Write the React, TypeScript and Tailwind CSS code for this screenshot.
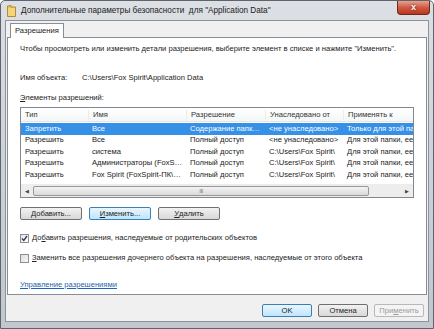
const rows = [
  { type: "Запретить", name: "Все", perm: "Содержание папк…", from: "<не унаследовано>", apply: "Только для этой па", sel: true },
  { type: "Разрешить", name: "Все", perm: "Полный доступ", from: "<не унаследовано>", apply: "Для этой папки, ее" },
  { type: "Разрешить", name: "система", perm: "Полный доступ", from: "C:\\Users\\Fox Spirit\\", apply: "Для этой папки, ее" },
  { type: "Разрешить", name: "Администраторы (FoxS…", perm: "Полный доступ", from: "C:\\Users\\Fox Spirit\\", apply: "Для этой папки, ее" },
  { type: "Разрешить", name: "Fox Spirit (FoxSpirit-ПК\\…", perm: "Полный доступ", from: "C:\\Users\\Fox Spirit\\", apply: "Для этой папки, ее" },
];

const Btn = ({ children, blue = false, disabled = false, w = "w-[62px]" }: { children: React.ReactNode; blue?: boolean; disabled?: boolean; w?: string }) => (
  <div
    className={`${w} h-[13px] rounded-[2px] border flex items-center justify-center text-[7.6px] leading-none ${
      disabled
        ? "border-[#b5b9bd] bg-[#f4f4f4] text-[#9a9a9a]"
        : blue
        ? "border-[#3c7fb1] bg-gradient-to-b from-[#eaf6fd] to-[#bee6fd] text-[#222]"
        : "border-[#707070] bg-gradient-to-b from-[#f2f2f2] to-[#d8d8d8] text-[#222]"
    }`}
  >
    {children}
  </div>
);

const App = () => {
  return (
    <div
      className="w-[434px] h-[329px] flex flex-col overflow-hidden rounded-t-[5px] border border-[#5e646b] bg-gradient-to-b from-[#dcdfe3] via-[#cdd2d8] to-[#c2c7cd]"
      style={{ fontFamily: '"Liberation Sans", "Noto Sans", sans-serif' }}
    >
      {/* title bar */}
      <div className="h-[19px] flex items-start shrink-0">
        <svg width="9" height="12" viewBox="0 0 9 12" className="ml-[6px] mt-[4px]">
          <path d="M0.5 1 L4 0.5 L4 2 L8.5 2 L8.5 11.5 L0.5 11.5 Z" fill="#e8c25a" stroke="#a67c1e" strokeWidth="0.8" />
          <path d="M1 3 L8 3 L8 11 L1 11 Z" fill="#f3d67a" />
        </svg>
        <span className="ml-[5px] mt-[5px] text-[8.2px] leading-[10px] text-[#1a1a1a]">
          Дополнительные параметры безопасности&nbsp; для "Application Data"
        </span>
        <div className="ml-auto mr-[3px] w-[33px] h-[14px] rounded-b-[4px] border border-t-0 border-[#6b2a20] bg-gradient-to-b from-[#e6a08e] via-[#cf5a41] to-[#b8361f] flex items-center justify-center">
          <span className="text-[9px] font-bold text-white leading-none" style={{ textShadow: "0 0 2px #5a1208" }}>
            x
          </span>
        </div>
      </div>

      {/* dialog body */}
      <div className="flex-1 mx-[4px] mb-[6px] border border-[#8c939b] bg-[#f0f0f0] flex flex-col text-[#222]">
        {/* tab strip */}
        <div className="h-[16px] flex items-end pl-[4px] shrink-0">
          <div className="relative top-[1px] h-[15px] px-[4px] border border-b-0 border-[#898c95] bg-white text-[7.6px] leading-[14px] z-10">
            Разрешения
          </div>
        </div>

        {/* tab panel */}
        <div className="mx-[1px] h-[258px] border border-[#898c95] bg-white px-[12px] flex flex-col text-[7.6px] leading-[10px]">
          <div className="mt-[6px] whitespace-nowrap">
            Чтобы просмотреть или изменить детали разрешения, выберите элемент в списке и нажмите "Изменить".
          </div>

          <div className="mt-[19px] flex">
            <span className="w-[62px]">Имя объекта:</span>
            <span>C:\Users\Fox Spirit\Application Data</span>
          </div>

          <div className="mt-[10px]">
            <span className="underline">Э</span>лементы разрешений:
          </div>

          {/* list view */}
          <div className="mt-[4px] h-[91px] border border-[#828790] bg-white flex flex-col overflow-hidden">
            <div className="h-[14px] flex items-center shrink-0 bg-gradient-to-b from-white to-[#f5f6f7] border-b border-[#e5e5e5] text-[#333]">
              <div className="w-[67px] pl-[4px]">Тип</div>
              <div className="w-[98px] pl-[4px] border-l border-[#ececec]">Имя</div>
              <div className="w-[79px] pl-[4px] border-l border-[#ececec]">Разрешение</div>
              <div className="w-[78px] pl-[4px] border-l border-[#ececec]">Унаследовано от</div>
              <div className="flex-1 pl-[4px] border-l border-[#ececec] whitespace-nowrap">Применять к</div>
            </div>
            <div className="flex-1 flex flex-col pt-[1px]">
              {rows.map((r, i) => (
                <div
                  key={i}
                  className={`h-[11.5px] flex items-center whitespace-nowrap overflow-hidden ${
                    r.sel ? "bg-[#3590e6] text-white" : "text-[#222]"
                  }`}
                >
                  <div className="w-[67px] pl-[4px] shrink-0">{r.type}</div>
                  <div className="w-[98px] pl-[4px] shrink-0">{r.name}</div>
                  <div className="w-[79px] pl-[4px] shrink-0">{r.perm}</div>
                  <div className="w-[78px] pl-[4px] shrink-0">{r.from}</div>
                  <div className="flex-1 pl-[4px]">{r.apply}</div>
                </div>
              ))}
            </div>
            {/* horizontal scrollbar */}
            <div className="h-[13px] shrink-0 bg-[#ededed] flex items-center px-[2px] gap-[2px]">
              <div className="w-[8px] flex justify-center text-[5px] text-[#444]">◀</div>
              <div className="flex-1 h-[10px] rounded-[2px] border border-[#979797] bg-gradient-to-b from-[#f3f3f3] to-[#dadada] flex items-center justify-center">
                <span className="text-[6px] leading-none text-[#777] tracking-[-0.5px]">III</span>
              </div>
              <div className="w-[30px]" />
              <div className="w-[8px] flex justify-center text-[5px] text-[#444]">▶</div>
            </div>
          </div>

          {/* list buttons */}
          <div className="mt-[9px] flex gap-[7px]">
            <Btn>
              <span className="underline">Д</span>обавить...
            </Btn>
            <Btn blue>
              <span className="underline">И</span>зменить...
            </Btn>
            <Btn>
              <span className="underline">У</span>далить
            </Btn>
          </div>

          {/* checkboxes */}
          <div className="mt-[13px] flex items-center gap-[3px]">
            <div className="w-[9px] h-[9px] border border-[#8f8f8f] bg-gradient-to-br from-[#e4e4e4] to-white flex items-center justify-center">
              <svg width="7" height="7" viewBox="0 0 7 7">
                <path d="M1 3.5 L2.8 5.5 L6 1" fill="none" stroke="#2a3b5c" strokeWidth="1.3" />
              </svg>
            </div>
            <span>
              До<span className="underline">б</span>авить разрешения, наследуемые от родительских объектов
            </span>
          </div>

          <div className="mt-[10px] flex items-center gap-[3px]">
            <div className="w-[9px] h-[9px] border border-[#8f8f8f] bg-gradient-to-br from-[#dcdcdc] to-[#f8f8f8]" />
            <span>
              <span className="underline">З</span>аменить все разрешения дочернего объекта на разрешения, наследуемые от этого объекта
            </span>
          </div>

          <div className="mt-[17px] text-[#2064b0] underline">Управление разрешениями</div>
        </div>

        {/* dialog buttons */}
        <div className="mt-[9px] mr-[4px] flex justify-end gap-[6px]">
          <Btn blue w="w-[50px]">OK</Btn>
          <Btn w="w-[50px]">Отмена</Btn>
          <Btn disabled w="w-[50px]">
            При<span className="underline">м</span>енить
          </Btn>
        </div>
      </div>
    </div>
  );
};

export default App;
